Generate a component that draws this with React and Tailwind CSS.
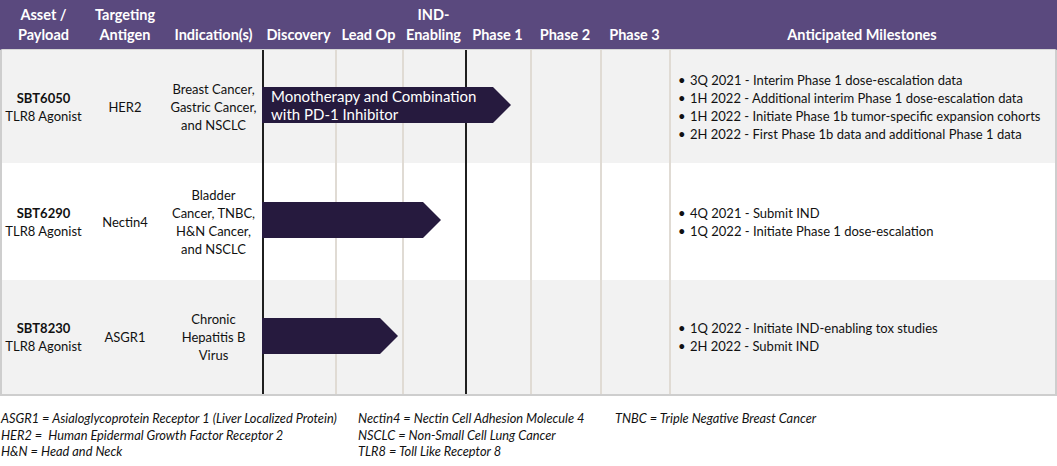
// Pipeline table

const font = { fontFamily: "Lato, 'Liberation Sans', sans-serif" };

const stageBorders = [
    "border-l-2 border-[#1f1f1f]",
    "border-l-2 border-[#e0dbd4]",
    "border-l-2 border-[#e0dbd4]",
    "border-l-2 border-[#1f1f1f]",
    "border-l-2 border-[#e0dbd4]",
    "border-l-2 border-[#e0dbd4]",
];

const programs = [
    {
        name: "SBT6050",
        antigen: "HER2",
        indication: ["Breast Cancer,", "Gastric Cancer,", "and NSCLC"],
        rowClass: "h-[113px] bg-[#f2f2f2]",
        arrowClass: "w-[231px]",
        label: ["Monotherapy and Combination", "with PD-1 Inhibitor"],
        milestones: [
            "3Q 2021 - Interim Phase 1 dose-escalation data",
            "1H 2022 - Additional interim Phase 1 dose-escalation data",
            "1H 2022 - Initiate Phase 1b tumor-specific expansion cohorts",
            "2H 2022 - First Phase 1b data and additional Phase 1 data",
        ],
    },
    {
        name: "SBT6290",
        antigen: "Nectin4",
        indication: ["Bladder", "Cancer, TNBC,", "H&N Cancer,", "and NSCLC"],
        rowClass: "h-[117px] bg-white",
        arrowClass: "w-[161px]",
        label: null,
        milestones: ["4Q 2021 - Submit IND", "1Q 2022 - Initiate Phase 1 dose-escalation"],
    },
    {
        name: "SBT8230",
        antigen: "ASGR1",
        indication: ["Chronic", "Hepatitis B", "Virus"],
        rowClass: "h-[114px] bg-[#f2f2f2]",
        arrowClass: "w-[118px]",
        label: null,
        milestones: ["1Q 2022 - Initiate IND-enabling tox studies", "2H 2022 - Submit IND"],
    },
];

const grid = "grid grid-cols-[83px_80px_97px_73px_67px_63px_65px_70px_69px_386px]";

function Header() {
    const heads = [
        ["Asset /", "Payload"],
        ["Targeting", "Antigen"],
        ["Indication(s)"],
        ["Discovery"],
        ["Lead Op"],
        ["IND-", "Enabling"],
        ["Phase 1"],
        ["Phase 2"],
        ["Phase 3"],
        ["Anticipated Milestones"],
    ];
    return (
        <div className={`${grid} h-[49px] bg-[#5a497e] border-x-2 border-[#5a497e] border-b border-b-[#d6d6d6] box-content`}>
            {heads.map((h, i) => (
                <div key={i} className="flex flex-col items-center justify-end pb-[4px] text-white font-bold text-[14.5px] leading-[20px] text-center whitespace-nowrap">
                    {h.map((line) => <span key={line}>{line}</span>)}
                </div>
            ))}
        </div>
    );
}

function Row({ p }) {
    return (
        <div className={`${grid} ${p.rowClass} text-[13px] text-[#111] leading-[18px]`}>
            <div className="col-start-1 row-start-1 flex flex-col items-center justify-center text-center">
                <span className="font-bold">{p.name}</span>
                <span>TLR8 Agonist</span>
            </div>
            <div className="col-start-2 row-start-1 flex items-center justify-center">{p.antigen}</div>
            <div className="col-start-3 row-start-1 flex flex-col items-center justify-center text-center">
                {p.indication.map((l) => <span key={l}>{l}</span>)}
            </div>
            {stageBorders.map((b, i) => (
                <div key={i} className={`row-start-1 ${b}`} style={{ gridColumnStart: i + 4 }} />
            ))}
            <div className="col-start-4 col-span-6 row-start-1 z-10 self-center flex items-center mb-[3px]">
                <div className={`${p.arrowClass} h-[36px] bg-[#261a3e] text-white text-[15px] leading-[18px] pl-[9px] flex flex-col justify-center`}>
                    {p.label && p.label.map((l) => <span key={l} className="whitespace-nowrap">{l}</span>)}
                </div>
                <div className="w-0 h-0 border-y-[18px] border-y-transparent border-l-[18px] border-l-[#261a3e]" />
            </div>
            <div className="col-start-10 row-start-1 border-l-2 border-[#e0dbd4] flex flex-col justify-center pl-[7px]">
                {p.milestones.map((m) => (
                    <div key={m} className="flex whitespace-nowrap">
                        <span className="w-[12px]">•</span>
                        <span>{m}</span>
                    </div>
                ))}
            </div>
        </div>
    );
}

export default function App() {
    return (
        <div className="w-[1057px] h-[466px] bg-white" style={font}>
            <Header />
            <div className="border-x-2 border-b-2 border-[#cecece] box-border">
                {programs.map((p) => <Row key={p.name} p={p} />)}
            </div>
            <div className="flex pt-[14px] pl-[1px] text-[12.8px] leading-[16.5px] italic text-[#111]">
                <div className="w-[357px] flex flex-col whitespace-nowrap">
                    <span>ASGR1 = Asialoglycoprotein Receptor 1 (Liver Localized Protein)</span>
                    <span>HER2 =&nbsp; Human Epidermal Growth Factor Receptor 2</span>
                    <span>H&amp;N = Head and Neck</span>
                </div>
                <div className="w-[257px] flex flex-col whitespace-nowrap">
                    <span>Nectin4 = Nectin Cell Adhesion Molecule 4</span>
                    <span>NSCLC = Non-Small Cell Lung Cancer</span>
                    <span>TLR8 = Toll Like Receptor 8</span>
                </div>
                <div className="flex flex-col whitespace-nowrap">
                    <span>TNBC = Triple Negative Breast Cancer</span>
                </div>
            </div>
        </div>
    );
}
